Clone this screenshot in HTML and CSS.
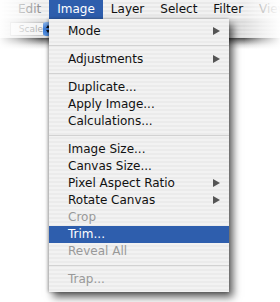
FILE: index.html
```html
<!DOCTYPE html>
<html lang="en">
<head>
  <meta charset="UTF-8">
  <title>Image menu</title>
  <link rel="stylesheet" href="styles.css">
</head>
<body>
  <div class="screen">
    <div class="menubar">
      <span class="title dim">Edit</span>
      <span class="title open">Image</span>
      <span class="title">Layer</span>
      <span class="title">Select</span>
      <span class="title">Filter</span>
      <span class="title dim">View</span>
    </div>

    <div class="options">
      <div class="field">Scale</div>
      <div class="stepper">
        <span class="up"></span>
        <span class="down"></span>
      </div>
    </div>
    <div class="options-shadow"></div>

    <div class="fade fade-left"></div>
    <div class="fade fade-right"></div>

    <!-- dropdown of the Image menu -->
    <ul class="menu">
      <li class="item sub">Mode</li>
      <li class="sep"></li>
      <li class="item sub">Adjustments</li>
      <li class="sep"></li>
      <li class="item">Duplicate...</li>
      <li class="item">Apply Image...</li>
      <li class="item">Calculations...</li>
      <li class="sep"></li>
      <li class="item">Image Size...</li>
      <li class="item">Canvas Size...</li>
      <li class="item sub">Pixel Aspect Ratio</li>
      <li class="item sub">Rotate Canvas</li>
      <li class="item off">Crop</li>
      <li class="item selected">Trim...</li>
      <li class="item off">Reveal All</li>
      <li class="sep"></li>
      <li class="item off">Trap...</li>
    </ul>
  </div>
</body>
</html>
```

FILE: styles.css
```css
body {
  margin: 0;
  background-color: #fff;
  font-family: 'DejaVu Sans', 'Liberation Sans', sans-serif;
  font-size: 12px;
  color: #111;
}

.screen {
  position: relative;
  width: 280px;
  height: 302px;
  overflow: hidden;
}

.menubar {
  display: flex;
  height: 19px;
  padding-left: 10px;
  background: repeating-linear-gradient(#f2f2f2 0 2px, #e9e9e9 2px 4px);
  white-space: nowrap;
}

.title {
  padding: 0 8px;
  line-height: 19px;
  color: #111;
}

.title.dim {
  color: #888;
}

.title.open {
  background-color: #2e5ead;
  color: #fff;
}

.options {
  display: flex;
  align-items: center;
  height: 18px;
  padding-top: 1px;
  background: repeating-linear-gradient(#e4e4e4 0 2px, #dcdcdc 2px 4px);
}

.field {
  width: 30px;
  height: 12px;
  margin-left: 10px;
  padding-left: 2px;
  background-color: #f4f4f4;
  border: 1px solid #c4c4c4;
  font-size: 9px;
  line-height: 12px;
  color: #aaa;
  overflow: hidden;
  direction: rtl;
}

.stepper {
  display: flex;
  flex-direction: column;
  align-items: center;
  justify-content: center;
  gap: 2px;
  width: 9px;
  height: 14px;
  margin-left: -1px;
  border-radius: 3px;
  background: linear-gradient(#8cb6ec, #3b79d4 50%, #5a97e6);
}

.stepper span {
  width: 0;
  height: 0;
  border-left: 2px solid transparent;
  border-right: 2px solid transparent;
}

.stepper .up {
  border-bottom: 3px solid #111;
}

.stepper .down {
  border-top: 3px solid #111;
}

.options-shadow {
  height: 11px;
  background: linear-gradient(#4e4e4e, #8a8a8a 25%, #dedede 65%, #fff);
}

.fade {
  position: absolute;
  top: 0;
  height: 50px;
}

.fade-left {
  left: 0;
  width: 42px;
  background: linear-gradient(to right, rgba(255,255,255,0.97), rgba(255,255,255,0.65) 40%, rgba(255,255,255,0));
}

.fade-right {
  right: 0;
  width: 36px;
  background: linear-gradient(to left, rgba(255,255,255,0.97), rgba(255,255,255,0.55) 50%, rgba(255,255,255,0));
}

.menu {
  position: absolute;
  top: 19px;
  left: 49px;
  width: 180px;
  margin: 0;
  padding: 4px 0;
  list-style: none;
  background: repeating-linear-gradient(#f2f2f2 0 2px, #ebebeb 2px 4px);
  box-shadow: -1px 0 3px rgba(0,0,0,0.3), 4px 5px 8px rgba(0,0,0,0.65);
}

.item {
  position: relative;
  height: 17px;
  padding-left: 19px;
  line-height: 17px;
  color: #111;
}

.item.sub::after {
  content: "";
  position: absolute;
  right: 9px;
  top: 4px;
  border-top: 4.5px solid transparent;
  border-bottom: 4.5px solid transparent;
  border-left: 7px solid #555;
}

.item.off {
  color: #999;
}

.item.selected {
  background-color: #2e5ead;
  color: #fff;
}

.sep {
  height: 11px;
  position: relative;
}

.sep::before {
  content: "";
  position: absolute;
  left: 0;
  right: 0;
  top: 5px;
  height: 1px;
  background-color: #d2d2d2;
}
```
